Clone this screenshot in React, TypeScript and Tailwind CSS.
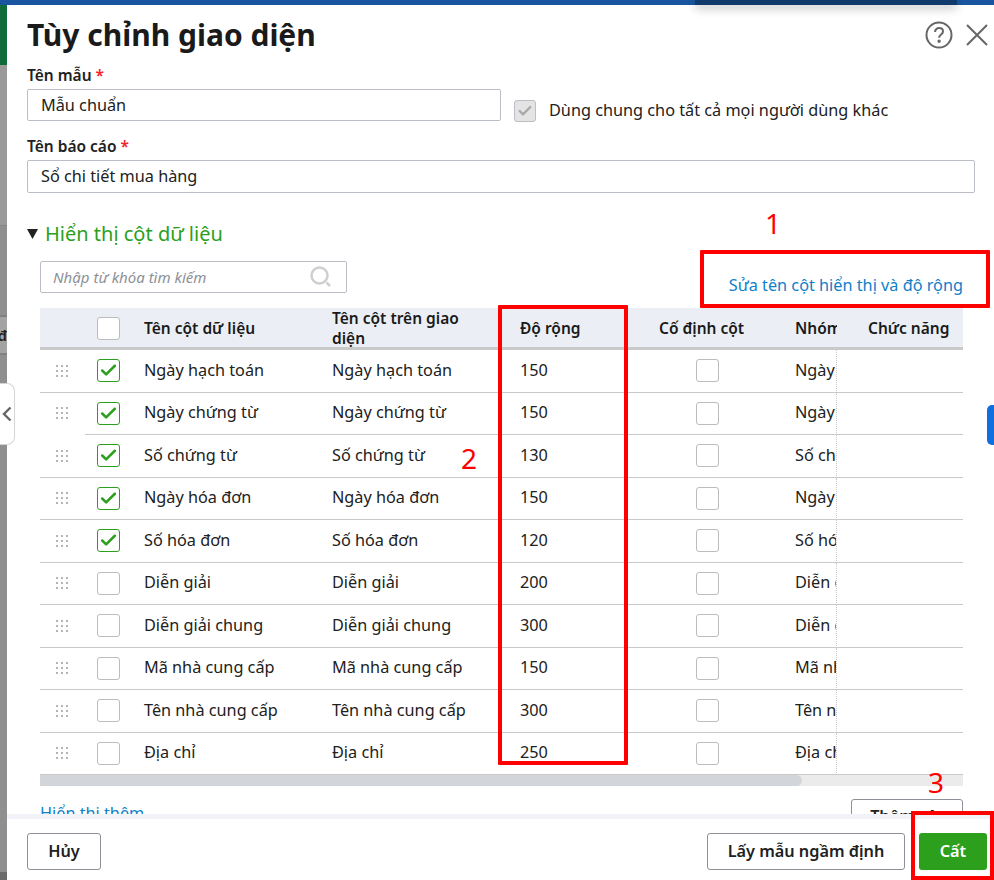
import { Check } from "lucide-react";

const font = "font-['Noto_Sans',sans-serif]";

const rows = [
  { name: "Ngày hạch toán", width: 150, checked: true },
  { name: "Ngày chứng từ", width: 150, checked: true },
  { name: "Số chứng từ", width: 130, checked: true },
  { name: "Ngày hóa đơn", width: 150, checked: true },
  { name: "Số hóa đơn", width: 120, checked: true },
  { name: "Diễn giải", width: 200, checked: false },
  { name: "Diễn giải chung", width: 300, checked: false },
  { name: "Mã nhà cung cấp", width: 150, checked: false },
  { name: "Tên nhà cung cấp", width: 300, checked: false },
  { name: "Địa chỉ", width: 250, checked: false },
];

const columns = "grid grid-cols-[45px_59px_188px_188px_139px_136px_42px_126px]";

const Box = ({ checked = false }: { checked?: boolean }) => (
  <span
    className={`flex h-[23px] w-[23px] items-center justify-center rounded-[3px] border bg-white ${
      checked ? "border-[#2ca01c]" : "border-[#bcbcbc]"
    }`}
  >
    {checked && <Check className="size-[19px] text-[#2ca01c]" strokeWidth={3.2} />}
  </span>
);

const DragDots = () => (
  <svg width="14" height="14" viewBox="0 0 14 14" className="ml-[15px] text-[#b4b4b4]" fill="currentColor">
    {[1, 6, 11].map((y) =>
      [1, 6, 11].map((x) => <rect key={`${x}-${y}`} x={x} y={y} width="2" height="2" />),
    )}
  </svg>
);

const Label = ({ text }: { text: string }) => (
  <div className="text-[15.5px] font-semibold leading-5 text-[#212121]">
    {text} <span className="text-[#f5222d]">*</span>
  </div>
);

const Button = ({ text, className = "" }: { text: string; className?: string }) => (
  <button className={`h-[37px] rounded-[3px] border border-[#8d9096] bg-white text-[16.25px] font-semibold text-[#212121] ${className}`}>
    {text}
  </button>
);

export default function App() {
  return (
    <div className={`relative flex h-[880px] w-[994px] flex-col overflow-hidden bg-white ${font}`}>
      <div className="h-[5px] shrink-0 bg-[#19569f]" />
      <div className="flex min-h-0 flex-1">
        {/* dimmed page behind the dialog */}
        <div className="flex w-[7px] shrink-0 flex-col bg-[#8f8f8f]">
          <div className="h-[60px] bg-[#0f6b3a]" />
          <div className="h-[161px] border-b border-[#858585] bg-[#9a9a9a]" />
          <div className="h-[89px]" />
          <div className="flex h-10 items-center justify-end overflow-hidden border-y-2 border-[#808080] bg-[#a3a3a3] text-[15px] font-semibold text-[#222]">
            đ
          </div>
          <div className="flex-1" />
          <div className="h-2 bg-[#6b6b6b]" />
        </div>

        <div className="flex min-w-0 flex-1 flex-col">
          <main className="min-h-0 flex-1 overflow-hidden pl-5 pr-[19px]">
            <div className="flex h-[60px] items-center justify-between">
              <h1 className="pb-[2px] text-[30px] font-bold text-[#1a1a1a]">Tùy chỉnh giao diện</h1>
              <div className="mr-[-14px] flex items-center gap-[12px] text-[#666]">
                <svg width="28" height="28" viewBox="0 0 28 28" fill="none" stroke="currentColor" strokeWidth="2">
                  <circle cx="14" cy="14" r="12.5" />
                  <path d="M10 11c0-2.4 1.8-3.900 4.100-3.900S18 8.500 18 10.500c0 3-3.900 3-3.900 6.300" />
                  <circle cx="14.100" cy="20.300" r="0.700" fill="currentColor" />
                </svg>
                <svg width="24" height="24" viewBox="0 0 24 24" fill="none" stroke="currentColor" strokeWidth="2">
                  <path d="M2 2 22 22M22 2 2 22" />
                </svg>
              </div>
            </div>

            <div className="flex h-6 items-start">
              <Label text="Tên mẫu" />
            </div>
            <div className="flex h-8 items-start">
              <div className="flex h-8 w-[474px] items-center rounded-[2px] border border-[#babec5] pl-[13px] text-[16.25px] text-[#212121]">
                Mẫu chuẩn
              </div>
              <div className="ml-[13px] mt-[9px] flex items-center gap-[13px]">
                <span className="flex h-[22px] w-[22px] items-center justify-center rounded-[3px] border border-[#babec5] bg-[#e4e4e4]">
                  <Check className="size-4 text-[#a8a8a8]" strokeWidth={3.500} />
                </span>
                <span className="pb-[2px] text-[16.25px] text-[#212121]">Dùng chung cho tất cả mọi người dùng khác</span>
              </div>
            </div>

            <div className="mt-[15px] flex h-[24px] items-start">
              <Label text="Tên báo cáo" />
            </div>
            <div className="flex h-[33px] items-center rounded-[2px] border border-[#babec5] pl-[13px] text-[16.25px] text-[#212121]">
              Sổ chi tiết mua hàng
            </div>

            <div className="mt-[27px] flex h-[28px] items-center gap-[7px]">
              <svg width="11" height="10" viewBox="0 0 11 10" className="fill-[#212121]">
                <path d="M0 0H11L5.500 10Z" />
              </svg>
              <span className="text-[20px] text-[#2ca01c]">Hiển thị cột dữ liệu</span>
            </div>

            <div className="ml-[13px] mr-3 mt-[13px]">
              <div className="flex h-[47px] items-start justify-between">
                <div className="flex h-[32px] w-[307px] items-center justify-between rounded-[2px] border border-[#babec5] pl-3 pr-[14px]">
                  <span className="text-[15px] italic text-[#8d9096]">Nhập từ khóa tìm kiếm</span>
                  <svg width="22" height="22" viewBox="0 0 22 22" fill="none" stroke="#cfcfcf">
                    <circle cx="9.500" cy="9.500" r="8" strokeWidth="2.500" />
                    <path d="M16.500 16.500l3.500 3.500" strokeWidth="2.500" />
                  </svg>
                </div>
                <span className="mt-[14px] text-[16.25px] leading-5 text-[#0f7fc8]">Sửa tên cột hiển thị và độ rộng</span>
              </div>

              <div className={`${columns} h-[42px] border-b-[3px] border-[#c9c9c9] bg-[#ebeff5] text-[15.5px] font-semibold leading-[20px] text-[#1a1a1a]`}>
                <div />
                <div className="flex items-center pl-3"><Box /></div>
                <div className="flex items-center">Tên cột dữ liệu</div>
                <div className="flex items-center pr-[40px]">Tên cột trên giao diện</div>
                <div className="flex items-center">Độ rộng</div>
                <div className="flex items-center">Cố định cột</div>
                <div className="flex items-center overflow-hidden whitespace-nowrap">Nhóm cột</div>
                <div className="flex items-center pl-[31px]">Chức năng</div>
              </div>

              {rows.map((row, i) => {
                const cell = "flex h-[42.500px] items-center border-b border-[#c9c9c9]";
                return (
                  <div key={row.name} className={`${columns} text-[16.25px] text-[#212121]`}>
                    <div className={`${cell} ${i === 1 ? "border-b-transparent" : ""}`}><DragDots /></div>
                    <div className={`${cell} pl-3`}><Box checked={row.checked} /></div>
                    <div className={`${cell} pb-[2px]`}>{row.name}</div>
                    <div className={`${cell} pb-[2px]`}>{row.name}</div>
                    <div className={`${cell} pb-[2px]`}>{row.width}</div>
                    <div className={`${cell} pl-[37px]`}><Box /></div>
                    <div className={`${cell} overflow-hidden whitespace-nowrap border-r border-r-[#c9c9c9] border-dotted pb-[2px] [border-bottom-style:solid]`}>{row.name}</div>
                    <div className={cell} />
                  </div>
                );
              })}

              <div className="h-[11px] bg-[#ebebeb]">
                <div className="h-full w-[762px] rounded-r-full bg-[#d2d5d9]" />
              </div>

              <div className="mt-[13px] flex items-start justify-between">
                <span className="mt-[4px] text-[16.25px] leading-5 text-[#0f7fc8]">Hiển thị thêm</span>
                <Button text="Thêm cột" className="w-[112px] pb-[3px]" />
              </div>
            </div>
          </main>

          <footer className="flex h-[66px] shrink-0 items-start justify-between border-t-[5px] border-[#f1f3f8] pl-5 pr-[7px] pt-[14px]">
            <Button text="Hủy" className="w-[74px]" />
            <div className="flex gap-[14px]">
              <Button text="Lấy mẫu ngầm định" className="w-[198px]" />
              <button className="h-[37px] w-[68px] rounded-[3px] bg-[#2ca01c] text-[16.25px] font-semibold text-white">Cất</button>
            </div>
          </footer>
        </div>
      </div>

      {/* window shadow falling over the top bar */}
      <div className="absolute left-[695px] top-0 h-[5px] w-[262px] bg-[#10396c] shadow-[0_3px_10px_rgba(0,0,0,0.3)]" />

      {/* collapse tab and side marker */}
      <div className="absolute left-0 top-[383px] flex h-[62px] w-[15px] items-center justify-center rounded-r-[8px] border border-l-0 border-[#d5d5d5] bg-white">
        <svg width="10" height="16" viewBox="0 0 10 16" fill="none" stroke="#666" strokeWidth="2.400">
          <path d="M8.500 1.500 2 8l6.500 6.500" />
        </svg>
      </div>
      <div className="absolute right-0 top-[405px] h-10 w-[7px] rounded-l-[5px] bg-[#0f6fde]" />

      {/* red annotations */}
      <div className="absolute left-[700px] top-[250px] h-[58px] w-[290px] rounded-[1px] border-4 border-[#ff0000]" />
      <div className="absolute left-[498px] top-[305px] h-[460px] w-[130px] rounded-[1px] border-4 border-[#ff0000]" />
      <div className="absolute left-[911px] top-[811px] h-[69px] w-[83px] border-4 border-[#ff0000]" />
      <span className="absolute left-[765px] top-[205px] text-[28px] leading-9 text-[#ff0000]">1</span>
      <span className="absolute left-[461px] top-[440px] text-[28px] leading-9 text-[#ff0000]">2</span>
      <span className="absolute left-[928px] top-[764px] text-[28px] leading-9 text-[#ff0000]">3</span>
    </div>
  );
}
